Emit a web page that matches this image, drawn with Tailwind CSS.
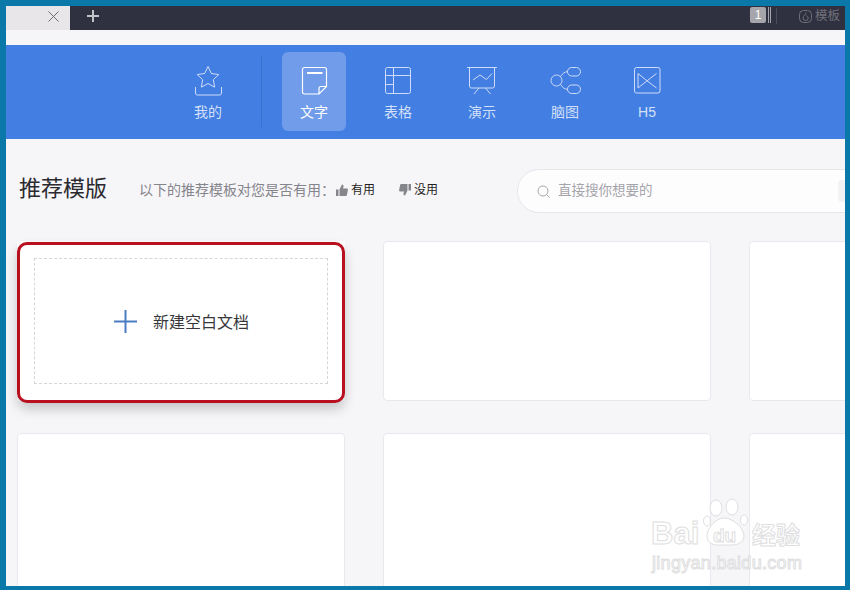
<!DOCTYPE html>
<html lang="zh-CN">
<head>
  <meta charset="UTF-8">
  <meta name="viewport" content="width=device-width, initial-scale=1.0">
  <title>推荐模版</title>
  <script src="https://cdn.jsdelivr.net/npm/@tailwindcss/browser@4"></script>
</head>
<body class="bg-[#0a78a8] font-['Liberation_Sans','Noto_Sans_CJK_SC',sans-serif]">
  <div class="w-[850px] h-[590px] pt-[6px] pl-[6px] pr-[5px] pb-[4px] overflow-hidden">
    <div class="relative w-full h-full flex flex-col overflow-hidden bg-[#f6f5f8]">

      <!-- Title bar -->
      <div class="h-6 shrink-0 flex items-center bg-[#2f3040]">
        <div class="w-16 h-full bg-[#e8e6e8] flex items-center justify-end pr-[11px]">
          <svg class="w-[11px] h-[11px] -mt-1" viewBox="0 0 11 11" fill="none" stroke="#6b6b70" stroke-width="1"><path d="M0.5 0.5l10 10M10.500 0.5l-10 10"/></svg>
        </div>
        <svg class="ml-[17px] -mt-[5px] w-3 h-3" viewBox="0 0 12 12" fill="none" stroke="#c4c4c8" stroke-width="2"><path d="M6 0v12M0 6h12"/></svg>
        <div class="ml-auto flex items-center pr-[5px]">
          <div class="w-4 h-4 -mt-[6px] rounded-[2px] bg-[#a5a5ab] text-white text-[12px] leading-4 text-center">1</div>
          <div class="w-px h-4 -mt-[6px] ml-[2px] bg-[#a5a5ab]"></div>
          <div class="w-px h-4 -mt-[6px] ml-px bg-[#a5a5ab]"></div>
          <div class="w-px h-4 -mt-1 ml-[5px] bg-[#4c4d5a]"></div>
          <svg class="ml-[22px] -mt-[3px] w-[13px] h-[13px]" viewBox="0 0 13 13" fill="none" stroke="#6f7079" stroke-width="1"><rect x="0.5" y="0.5" width="12" height="12" rx="4"/><path d="M7 2.500C7.500 4.500 4 5.500 4 8a2.600 2.600 0 0 0 5.200 0C9.200 6.500 8 6 7.500 5.500"/></svg>
          <span class="ml-[3px] -mt-1 text-[12.500px] leading-4 text-[#6f7079] whitespace-nowrap">模板</span>
        </div>
      </div>

      <div class="h-[15px] shrink-0 bg-[#f6f5f8]"></div>

      <!-- Category nav -->
      <nav class="h-[94px] shrink-0 bg-[#437ee3] flex items-start pl-[170px] pt-[7px] text-[14px] text-[#d3e0f8]">
        <div class="w-16 h-[79px] pt-3 flex flex-col items-center">
          <svg class="w-8 h-8" viewBox="0 0 32 32" fill="none" stroke="#cfdcf7" stroke-width="1"><path d="M16 2.500l3.300 7 7.500 1-5.500 5.200 1.400 7.500L16 19.500l-6.700 3.700 1.400-7.500L5.200 10.500l7.500-1z"/><path d="M3.500 23v6a2 2 0 0 0 2 2h22a2 2 0 0 0 2-2v-6"/></svg>
          <span class="mt-[6px] leading-5">我的</span>
        </div>
        <div class="w-px h-[71px] mt-[4px] ml-[21px] mr-5 bg-[#3a70cc]"></div>
        <div class="w-16 h-[79px] pt-3 flex flex-col items-center rounded-md bg-[#709ce9] text-white">
          <svg class="w-8 h-8" viewBox="0 0 32 32" fill="none" stroke="#ffffff" stroke-width="1.200"><path d="M6.500 3.500h20a2 2 0 0 1 2 2v17L21 30H6.500a2 2 0 0 1-2-2V5.500a2 2 0 0 1 2-2z"/><path d="M21 30v-5.500a2 2 0 0 1 2-2h5.500"/><path d="M9 9h15.500" stroke-width="2"/></svg>
          <span class="mt-[6px] leading-5">文字</span>
        </div>
        <div class="w-16 h-[79px] ml-5 pt-3 flex flex-col items-center">
          <svg class="w-8 h-8" viewBox="0 0 32 32" fill="none" stroke="#cfdcf7" stroke-width="1"><rect x="3.500" y="3.500" width="25" height="26" rx="2"/><path d="M3.500 11.500h25M11.500 3.500v26M3.500 20.500h8"/></svg>
          <span class="mt-[6px] leading-5">表格</span>
        </div>
        <div class="w-16 h-[79px] ml-5 pt-3 flex flex-col items-center">
          <svg class="w-8 h-8" viewBox="0 0 32 32" fill="none" stroke="#cfdcf7" stroke-width="1"><path d="M1 3.500h30M3.500 3.500v18.500a2 2 0 0 0 2 2h21a2 2 0 0 0 2-2V3.500"/><path d="M13 24l-5 6M19.500 24l5 6"/><path d="M7 16l7-5 6.500 4.500 5.500-6"/></svg>
          <span class="mt-[6px] leading-5">演示</span>
        </div>
        <div class="w-16 h-[79px] ml-[19px] pt-3 flex flex-col items-center">
          <svg class="w-8 h-8" viewBox="0 0 32 32" fill="none" stroke="#cfdcf7" stroke-width="1"><circle cx="7.500" cy="16.500" r="5.500"/><rect x="18.500" y="3.500" width="13" height="8.500" rx="4.200"/><rect x="18.500" y="21" width="13" height="8.500" rx="4.200"/><path d="M11.500 12.500c2-3 4-4.500 7-5M11.500 20.500c2 3 4 4.500 7 5"/></svg>
          <span class="mt-[6px] leading-5">脑图</span>
        </div>
        <div class="w-16 h-[79px] ml-[18px] pt-3 flex flex-col items-center">
          <svg class="w-8 h-8" viewBox="0 0 32 32" fill="none" stroke="#cfdcf7" stroke-width="1"><rect x="3.500" y="3.500" width="25.500" height="25.500" rx="2"/><path d="M7 9.500v14.500l9-7.200 9.500 7.200M7 9.500l9 7.300 9.500-7.300"/></svg>
          <span class="mt-[6px] leading-5">H5</span>
        </div>
      </nav>

      <!-- Heading row -->
      <div class="h-[102px] shrink-0 flex items-start pl-[13px]">
        <h1 class="mt-[36px] shrink-0 text-[22px] leading-[28px] text-[#2b2b2f] whitespace-nowrap">推荐模版</h1>
        <p class="ml-[32px] mt-[41px] w-[197px] shrink-0 text-[14px] leading-5 text-[#85858c] whitespace-nowrap">以下的推荐模板对您是否有用：</p>
        <div class="mt-[41px] shrink-0 flex items-center h-5 text-[12px] text-[#1f1f23] whitespace-nowrap">
          <svg class="w-3 h-3 shrink-0" viewBox="0 0 12 12" fill="#85858c"><path d="M0 5.500h2.500V12H0zM3.500 5.500L6 0.500c1.300 0 1.800 1 1.500 2L7 4.500h4c.7 0 1 .6.900 1.200l-1 5.300c-.1.600-.6 1-1.200 1H3.500z"/></svg>
          <span class="ml-[3px]">有用</span>
          <svg class="w-3 h-3 shrink-0 ml-6" viewBox="0 0 12 12" fill="#85858c"><path d="M12 0H9.500v6.500H12zM8.500 6.500L6 11.500c-1.300 0-1.800-1-1.500-2L5 7.500H1c-.7 0-1-.6-.9-1.200L1.100 1c.1-.6.600-1 1.200-1h6.200z"/></svg>
          <span class="ml-[3px]">没用</span>
        </div>
        <div class="ml-[79px] mt-[30px] w-[400px] h-11 shrink-0 flex items-center pl-[19px] rounded-full border border-[#e6e5ea] bg-[#fefdfe]">
          <svg class="w-[13px] h-[13px] shrink-0" viewBox="0 0 13 13" fill="none" stroke="#a8a8ae" stroke-width="1"><circle cx="6" cy="6" r="5"/><path d="M9.700 9.700l2.800 2.800"/></svg>
          <span class="ml-2 pt-px text-[13.500px] text-[#a4a4aa] whitespace-nowrap">直接搜你想要的</span>
          <div class="ml-[185px] w-10 h-[22px] shrink-0 rounded bg-[#f3f2f5]"></div>
        </div>
      </div>

      <!-- Template cards -->
      <div class="grid grid-cols-[328px_328px_328px] gap-x-[38px] gap-y-8 pl-[11px]">
        <div class="relative h-40 bg-white">
          <div class="absolute left-0 right-0 top-px h-[161px] pt-[13px] px-[14px] rounded-[10px] border-[3px] border-[#b8101f] bg-white shadow-[0_6px_12px_rgba(0,0,0,0.2)]">
            <div class="h-[126px] flex items-center justify-center border border-dashed border-[#d6d6da]">
              <svg class="w-[23px] h-[23px] ml-px" viewBox="0 0 23 23" fill="none" stroke="#4a7cc4" stroke-width="2"><path d="M11.500 0v23M0 11.500h23"/></svg>
              <span class="ml-[16px] mt-[3px] text-[16px] leading-6 text-[#38383c]">新建空白文档</span>
            </div>
          </div>
        </div>
        <div class="h-40 rounded border border-[#e9e8ee] bg-white"></div>
        <div class="h-40 rounded border border-[#e9e8ee] bg-white"></div>
        <div class="h-40 rounded border border-[#e9e8ee] bg-white"></div>
        <div class="h-40 rounded border border-[#e9e8ee] bg-white"></div>
        <div class="h-40 rounded border border-[#e9e8ee] bg-white"></div>
      </div>

      <!-- Baidu watermark -->
      <div class="absolute left-[645px] top-[490px] w-[155px] h-[75px] text-white [-webkit-text-stroke:1px_#dedee0]">
        <span class="absolute left-0 top-[22px] text-[31px] leading-[32px] font-bold">Bai</span>
        <svg class="absolute left-[52px] top-[2px] w-[46px] h-[50px]" viewBox="0 0 46 50" fill="#ffffff" stroke="#dedee0" stroke-width="1"><ellipse cx="13" cy="10" rx="6" ry="8"/><ellipse cx="29" cy="9" rx="6" ry="8"/><ellipse cx="4" cy="23" rx="3.500" ry="5"/><ellipse cx="41" cy="22" rx="3.500" ry="5"/><path d="M21 20c-8 0-17 10-17 18 0 6 5 9 10 9h15c6 0 12-3 12-9 0-8-11-18-20-18z"/></svg>
        <span class="absolute left-[62px] top-[30px] text-[19px] leading-[20px] font-bold">du</span>
        <span class="absolute left-[101px] top-[26px] text-[24px] leading-[28px] font-bold whitespace-nowrap">经验</span>
        <span class="absolute left-[1px] top-[55px] text-[18px] leading-[24px] tracking-[0.300px] whitespace-nowrap">jingyan.baidu.com</span>
      </div>
    </div>
  </div>
</body>
</html>
